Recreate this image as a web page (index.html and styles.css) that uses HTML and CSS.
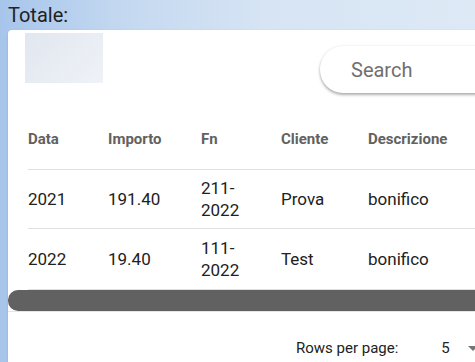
FILE: index.html
```html
<!DOCTYPE html>

<html>

<head>
    <link rel="stylesheet" href="styles.css">
</head>

<body>

    <div class="page">

        <div class="totale">Totale:</div>

        <div class="card">

            <div class="toolbar">
                <div class="logo"></div>
                <input type="text" class="search" placeholder="Search" />
            </div>

            <div class="table-wrap">
                <table class="grid">
                    <thead>
                        <tr>
                            <th class="c1">Data</th>
                            <th class="c2">Importo</th>
                            <th class="c3">Fn</th>
                            <th class="c4">Cliente</th>
                            <th class="c5">Descrizione</th>
                        </tr>
                    </thead>
                    <tbody>
                        <tr>
                            <td>2021</td>
                            <td>191.40</td>
                            <td>211-2022</td>
                            <td>Prova</td>
                            <td>bonifico</td>
                        </tr>
                        <tr>
                            <td>2022</td>
                            <td>19.40</td>
                            <td>111-2022</td>
                            <td>Test</td>
                            <td>bonifico</td>
                        </tr>
                    </tbody>
                </table>

                <div class="scroll-track">
                    <div class="scroll-thumb"></div>
                </div>
            </div>

            <div class="footer">
                <span class="rows-label">Rows per page:</span>
                <span class="rows-value">5</span>
                <span class="caret"></span>
            </div>

        </div>
    </div>

</body>

</html>
```

FILE: styles.css
```css
html,
body {
    margin: 0;
    padding: 0;
    overflow: hidden;
}

body {
    font-family: Roboto, "Liberation Sans", sans-serif;
    background: linear-gradient(to right, #a7c5eb 0%, #c3d8f0 25%, #d6e4f4 55%, #dde9f5 100%);
    height: 362px;
}

.page {
    padding: 4px 0 0 8px;
}

.totale {
    font-size: 20px;
    line-height: 23px;
    color: #222;
    margin-bottom: 3px;
}

.card {
    width: 640px;
    height: 340px;
    background-color: white;
    border-radius: 4px 0 0 0;
    box-shadow: 0 1px 3px rgba(0, 0, 0, 0.12);
}

.toolbar {
    display: flex;
    align-items: flex-start;
    height: 79px;
}

.logo {
    width: 78px;
    height: 50px;
    margin: 3px 0 0 17px;
    background: linear-gradient(135deg, #e1e7f0, #eff2f7);
}

.search {
    width: 250px;
    height: 47px;
    box-sizing: border-box;
    margin: 16px 0 0 217px;
    padding: 1px 0 0 31px;
    border: none;
    border-radius: 23px;
    box-shadow: 0 2px 3px rgba(0, 0, 0, 0.3), 0 0 3px rgba(0, 0, 0, 0.08);
    font-family: Roboto, "Liberation Sans", sans-serif;
    font-size: 20px;
    color: #333;
    outline: none;
}

.search::placeholder {
    color: #6f6f6f;
}

.grid {
    border-collapse: collapse;
    table-layout: fixed;
    margin-left: 20px;
    width: 600px;
}

.grid th,
.grid td {
    text-align: left;
    padding: 0 16px 0 0;
    vertical-align: middle;
}

.grid th {
    height: 60px;
    font-size: 15px;
    font-weight: bold;
    color: #616161;
    border-bottom: 1px solid #e0e0e0;
}

.grid td {
    height: 58px;
    font-size: 17px;
    line-height: 22.5px;
    color: #212121;
    border-bottom: 1px solid #e0e0e0;
}

.grid tbody tr:last-child td {
    height: 60px;
}

.c1 {
    width: 64px;
}

.c2 {
    width: 77px;
}

.c3 {
    width: 64px;
}

.c4 {
    width: 71px;
}

.c5 {
    width: 244px;
}

.scroll-track {
    margin-top: 0;
    border-bottom: 1px solid #e6e6e6;
}

.scroll-thumb {
    height: 21px;
    background-color: #616161;
    border-radius: 10px;
}

.footer {
    display: flex;
    align-items: center;
    padding-top: 27px;
    font-size: 15px;
    line-height: 18px;
    color: #222;
}

.rows-label {
    margin-left: 288px;
}

.rows-value {
    margin-left: 43px;
}

.caret {
    margin-left: 18px;
    width: 0;
    height: 0;
    border-left: 5px solid transparent;
    border-right: 5px solid transparent;
    border-top: 5px solid #757575;
}
```
